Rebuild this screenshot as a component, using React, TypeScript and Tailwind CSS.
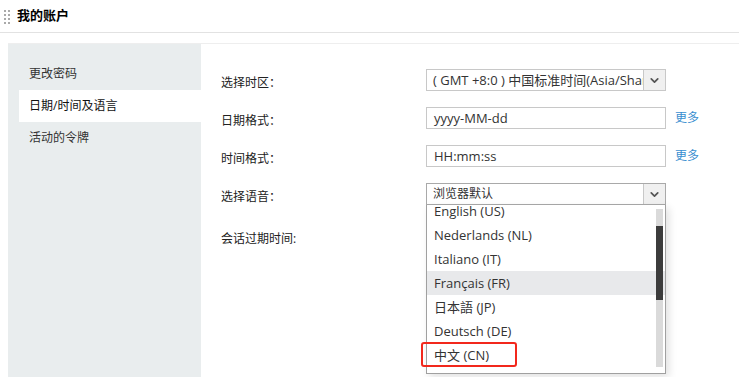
import { ChevronDown } from "lucide-react";

const FONT = { fontFamily: '"Open Sans", "Noto Sans CJK SC", sans-serif' };

const menu = ["更改密码", "日期/时间及语言", "活动的令牌"];
const langs = ["English (US)", "Nederlands (NL)", "Italiano (IT)", "Français (FR)", "日本語 (JP)", "Deutsch (DE)", "中文 (CN)"];

function Label({ children }: { children: React.ReactNode }) {
  return <div className="h-[22px] w-[205px] shrink-0 text-[12px] leading-[27px] text-[#222]">{children}</div>;
}

function Arrow() {
  return (
    <div className="flex w-[22px] items-center justify-center self-stretch border-l border-[#c8c8c8] bg-[#f0f0f0]">
      <ChevronDown size={13} strokeWidth={3.2} className="text-[#555]" />
    </div>
  );
}

export default function App() {
  return (
    <div style={FONT} className="h-[377px] w-[739px] overflow-hidden bg-white text-[#333]">
      {/* titulo */}
      <div className="flex h-[33px] items-center gap-[7px] border-b border-[#e2e2e2] pl-[4px]">
        <div className="grid grid-cols-2 gap-x-[2px] gap-y-[2px] pt-[2px]">
          {Array.from({ length: 8 }).map((_, i) => (
            <span key={i} className="h-[2px] w-[2px] bg-[#aaa]" />
          ))}
        </div>
        <span className="text-[13px] font-bold text-black">我的账户</span>
      </div>

      <div className="pl-2 pt-[10px]">
        <div className="flex h-[340px] border-t border-[#eee]">
          {/* menu lateral */}
          <div className="w-[193px] shrink-0 bg-[#e9edee] pl-[11px] pt-[14px]">
            {menu.map((m, i) => (
              <div
                key={m}
                className={`flex h-[32px] items-center pl-[10px] text-[12px] ${i === 1 ? "bg-white text-[#111]" : "text-[#333]"}`}
              >
                {m}
              </div>
            ))}
          </div>

          {/* formulario */}
          <div className="flex flex-col gap-[16px] pl-[20px] pt-[25px]">
            <div className="flex items-center">
              <Label>选择时区：</Label>
              <div className="flex h-[22px] w-[240px] border border-[#c8c8c8]">
                <div className="flex-1 overflow-hidden whitespace-nowrap pl-[6px] text-[13px] leading-[20px] text-[#333]">
                  ( GMT +8:0 ) 中国标准时间(Asia/Shanghai)
                </div>
                <Arrow />
              </div>
            </div>

            <div className="flex items-center">
              <Label>日期格式：</Label>
              <div className="h-[22px] w-[240px] border border-[#c8c8c8] pl-[7px] text-[13px] leading-[20px]">yyyy-MM-dd</div>
              <a className="ml-[9px] text-[12px] text-[#3a8fd0]">更多</a>
            </div>

            <div className="flex items-center">
              <Label>时间格式：</Label>
              <div className="h-[22px] w-[240px] border border-[#c8c8c8] pl-[7px] text-[13px] leading-[20px]">HH:mm:ss</div>
              <a className="ml-[9px] text-[12px] text-[#3a8fd0]">更多</a>
            </div>

            <div className="flex items-center">
              <Label>选择语音：</Label>
              <div className="relative">
                <div className="flex h-[22px] w-[240px] border border-[#a9a9a9]">
                  <div className="flex-1 pl-[6px] text-[12px] leading-[20px] text-[#333]">浏览器默认</div>
                  <Arrow />
                </div>

                {/* lista desplegable */}
                <div className="absolute left-0 top-[22px] z-10 h-[169px] w-[240px] overflow-hidden border border-t-0 border-[#a0a0a0] bg-white shadow-[3px_3px_8px_rgba(0,0,0,0.12)]">
                  <div className="-mt-[6px]">
                    {langs.map((l, i) => (
                      <div
                        key={l}
                        className={`h-[24px] pl-[7px] text-[13px] leading-[24px] text-[#333] ${i === 3 ? "bg-[#e8e9eb]" : ""}`}
                      >
                        {l}
                      </div>
                    ))}
                  </div>
                  <div className="absolute right-[2px] top-[4px] h-[158px] w-[7px] bg-[#dadada]">
                    <div className="mt-[17px] h-[74px] w-full bg-[#3c3c3c]" />
                  </div>
                </div>
                <div className="absolute left-[-5px] top-[159px] z-20 h-[25px] w-[96px] rounded-[3px] border-2 border-[#f2281c]" />
              </div>
            </div>

            <div className="mt-[4px] flex items-center">
              <Label>会话过期时间:</Label>
            </div>
          </div>
        </div>
      </div>
    </div>
  );
}
